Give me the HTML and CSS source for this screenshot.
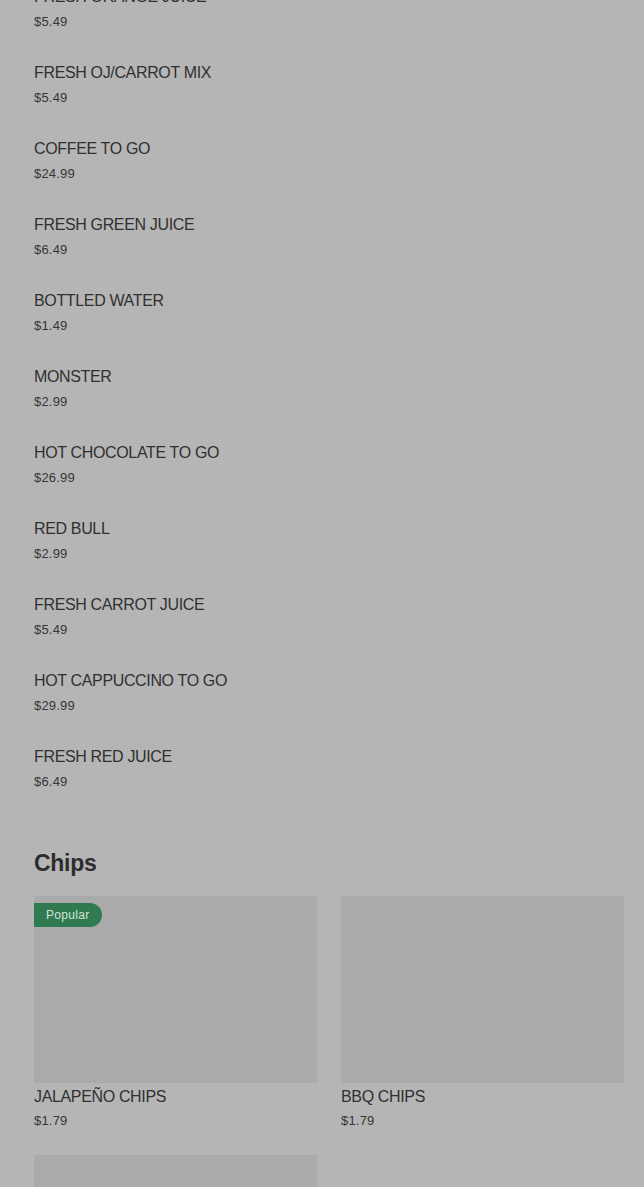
FILE: index.html
```html
<!DOCTYPE html>
<html lang="en">
<head>
    <meta charset="UTF-8">
    <meta name="viewport" content="width=device-width, initial-scale=1.0">
    <title>Menu</title>
    <link rel="stylesheet" href="styles.css">
</head>
<body>
    <div class="menu">
        <div class="item-list">
            <div class="item"><span class="item-name">FRESH ORANGE JUICE</span><span class="item-price">$5.49</span></div>
            <div class="item"><span class="item-name">FRESH OJ/CARROT MIX</span><span class="item-price">$5.49</span></div>
            <div class="item"><span class="item-name">COFFEE TO GO</span><span class="item-price">$24.99</span></div>
            <div class="item"><span class="item-name">FRESH GREEN JUICE</span><span class="item-price">$6.49</span></div>
            <div class="item"><span class="item-name">BOTTLED WATER</span><span class="item-price">$1.49</span></div>
            <div class="item"><span class="item-name">MONSTER</span><span class="item-price">$2.99</span></div>
            <div class="item"><span class="item-name">HOT CHOCOLATE TO GO</span><span class="item-price">$26.99</span></div>
            <div class="item"><span class="item-name">RED BULL</span><span class="item-price">$2.99</span></div>
            <div class="item"><span class="item-name">FRESH CARROT JUICE</span><span class="item-price">$5.49</span></div>
            <div class="item"><span class="item-name">HOT CAPPUCCINO TO GO</span><span class="item-price">$29.99</span></div>
            <div class="item"><span class="item-name">FRESH RED JUICE</span><span class="item-price">$6.49</span></div>
        </div>

        <h2 class="section-title">Chips</h2>
        <div class="card-grid">
            <div class="card">
                <div class="card-image"><span class="badge">Popular</span></div>
                <span class="item-name">JALAPEÑO CHIPS</span>
                <span class="item-price">$1.79</span>
            </div>
            <div class="card">
                <div class="card-image"></div>
                <span class="item-name">BBQ CHIPS</span>
                <span class="item-price">$1.79</span>
            </div>
            <div class="card">
                <div class="card-image"></div>
            </div>
        </div>
    </div>
</body>
</html>
```

FILE: styles.css
```css
body {
    font-family: "Liberation Sans", Arial, sans-serif;
    background-color: #b5b5b5;
    color: #303030;
    margin: 0;
}
.menu {
    padding: 0 20px 40px 34px;
    margin-top: -13px;
}
.item-list {
    display: flex;
    flex-direction: column;
    gap: 32px;
}
.item {
    display: flex;
    flex-direction: column;
    gap: 6px;
}
.item-name {
    font-size: 16px;
    line-height: 20px;
    letter-spacing: -0.35px;
}
.item-price {
    font-size: 13px;
    line-height: 18px;
    letter-spacing: 0.2px;
    color: #363636;
}
.section-title {
    font-size: 23px;
    line-height: 28px;
    font-weight: bold;
    letter-spacing: -0.3px;
    margin: 58px 0 19px;
    color: #2c2c2c;
}
.card-grid {
    display: grid;
    grid-template-columns: 1fr 1fr;
    column-gap: 24px;
    row-gap: 25px;
}
.card {
    display: flex;
    flex-direction: column;
}
.card-image {
    position: relative;
    height: 187px;
    background-color: #aaaaaa;
    margin-bottom: 4px;
}
.card .item-price {
    margin-top: 5px;
}
.badge {
    position: absolute;
    top: 7px;
    left: 0;
    height: 24px;
    line-height: 24px;
    padding: 0 13px 0 12px;
    background-color: #2f7a50;
    color: #d4e4da;
    font-size: 12px;
    letter-spacing: 0.3px;
    border-radius: 0 12px 12px 0;
}
```
